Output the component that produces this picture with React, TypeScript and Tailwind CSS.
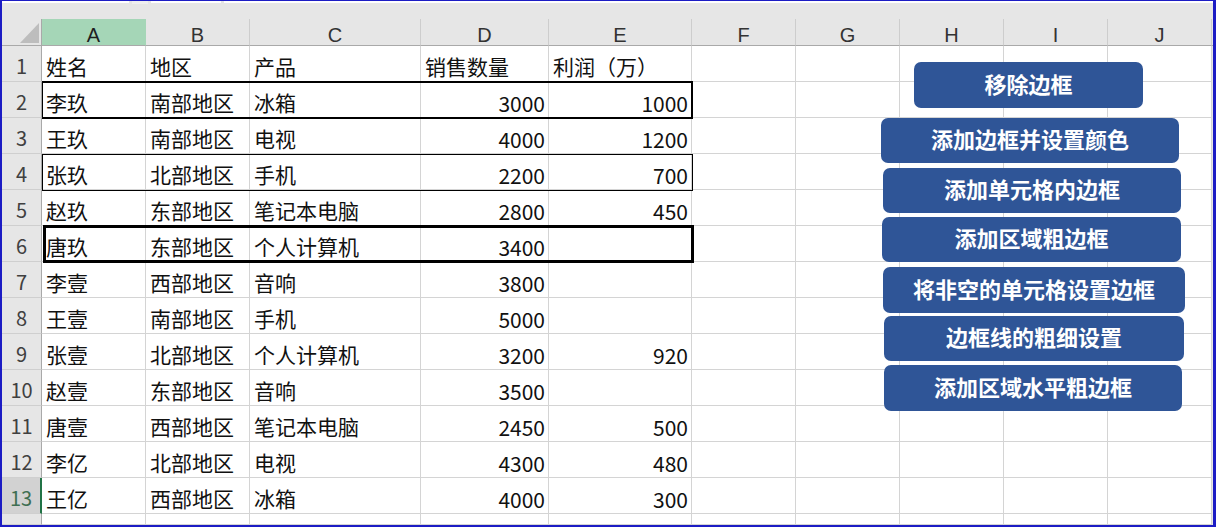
const COLS = [
  { key: "A", w: "w-[104px]" },
  { key: "B", w: "w-[104px]" },
  { key: "C", w: "w-[171px]" },
  { key: "D", w: "w-[128px]" },
  { key: "E", w: "w-[143px]" },
  { key: "F", w: "w-[104px]" },
  { key: "G", w: "w-[104px]" },
  { key: "H", w: "w-[104px]" },
  { key: "I", w: "w-[104px]" },
  { key: "J", w: "w-[104px]" },
];

const DATA = [
  ["姓名", "地区", "产品", "销售数量", "利润（万）"],
  ["李玖", "南部地区", "冰箱", "3000", "1000"],
  ["王玖", "南部地区", "电视", "4000", "1200"],
  ["张玖", "北部地区", "手机", "2200", "700"],
  ["赵玖", "东部地区", "笔记本电脑", "2800", "450"],
  ["唐玖", "东部地区", "个人计算机", "3400", ""],
  ["李壹", "西部地区", "音响", "3800", ""],
  ["王壹", "南部地区", "手机", "5000", ""],
  ["张壹", "北部地区", "个人计算机", "3200", "920"],
  ["赵壹", "东部地区", "音响", "3500", ""],
  ["唐壹", "西部地区", "笔记本电脑", "2450", "500"],
  ["李亿", "北部地区", "电视", "4300", "480"],
  ["王亿", "西部地区", "冰箱", "4000", "300"],
];

const BUTTONS = [
  { label: "移除边框", pos: "left-[912px] top-[16px] w-[229px] h-[46px]" },
  { label: "添加边框并设置颜色", pos: "left-[879px] top-[72px] w-[298px] h-[45px]" },
  { label: "添加单元格内边框", pos: "left-[881px] top-[122px] w-[298px] h-[45px]" },
  { label: "添加区域粗边框", pos: "left-[880px] top-[171px] w-[299px] h-[45px]" },
  { label: "将非空的单元格设置边框", pos: "left-[881px] top-[221px] w-[302px] h-[46px]" },
  { label: "边框线的粗细设置", pos: "left-[882px] top-[270px] w-[300px] h-[45px]" },
  { label: "添加区域水平粗边框", pos: "left-[882px] top-[319px] w-[298px] h-[46px]" },
];

function Row({ n, cells, short = false }: { n: number; cells: string[]; short?: boolean }) {
  const selected = n === 13;
  return (
    <div className={`flex ${short ? "h-[11px]" : "h-[36px]"}`}>
      <div
        className={`w-[40px] shrink-0 flex justify-center pt-[10px] border-b border-[#cfcfcf] text-[20px] leading-none ${
          selected
            ? "bg-[#d2d2d2] text-[#3f6f52] border-r-2 border-r-[#217346]"
            : "bg-[#e6e6e6] text-[#404040] border-r border-r-[#a9a9a9]"
        }`}
      >
        {n}
      </div>
      {COLS.map((c, i) => {
        const v = cells[i] ?? "";
        const num = n > 1 && (i === 3 || i === 4);
        return (
          <div
            key={c.key}
            className={`${c.w} shrink-0 bg-white border-r border-b border-[#d4d4d4] flex items-center pt-[6px] text-[21px] leading-none text-[#111] whitespace-nowrap ${
              num ? "justify-end pr-[3px] pt-[8px]" : "pl-[4px]"
            }`}
          >
            {v}
          </div>
        );
      })}
      <div className="flex-1 bg-[#e6e6e6]" />
    </div>
  );
}

export default function App() {
  return (
    <div className="w-[1216px] h-[527px] overflow-hidden bg-[#e6e6e6] border-l-2 border-r-[3px] border-t border-b-2 border-[#1c1cc4] font-['Noto_Sans_CJK_SC',sans-serif]">
      {/* formula bar remnants */}
      <div className="h-[18px] flex items-start gap-[3px]">
        <div className="w-[127px] h-[2px] bg-white" />
        <div className="w-[16px] h-[3px] bg-[#efefef]" />
        <div className="w-[70px] h-[2px] bg-white" />
        <div className="flex-1 h-[2px] bg-white" />
      </div>

      {/* column headers */}
      <div className="flex h-[27px] font-['Liberation_Sans',sans-serif]">
        <div className="w-[40px] shrink-0 relative border-b border-r border-[#a9a9a9]">
          <svg className="absolute left-[18px] top-[4px]" width="19" height="20" viewBox="0 0 19 20">
            <polygon points="19,0 19,20 0,20" fill="#bdbdbd" />
          </svg>
        </div>
        {COLS.map((c) => (
          <div
            key={c.key}
            className={`${c.w} shrink-0 flex justify-center items-center pt-[6px] text-[20px] leading-none border-b border-b-[#a9a9a9] border-r ${
              c.key === "A" ? "bg-[#a5d6b7] text-[#1f1f1f] border-r-[#a5d6b7]" : "text-[#333] border-r-[#cdcdcd]"
            }`}
          >
            {c.key}
          </div>
        ))}
        <div className="flex-1 border-b border-[#a9a9a9]" />
      </div>

      {/* sheet body */}
      <div className="relative">
        {DATA.map((cells, i) => (
          <Row key={i} n={i + 1} cells={cells} />
        ))}
        <Row n={14} cells={[]} short />

        {/* cell borders */}
        <div className="absolute left-[40px] top-[35px] w-[651px] h-[38px] border-2 border-l border-black" />
        <div className="absolute left-[40px] top-[108px] w-[651px] h-[37px] border border-black" />
        <div className="absolute left-[41px] top-[179px] w-[651px] h-[38px] border-[3px] border-black" />

        {/* macro buttons */}
        {BUTTONS.map((b) => (
          <div
            key={b.label}
            className={`absolute ${b.pos} rounded-[7px] bg-[#2f5597] flex items-center justify-center pb-[5px] text-white font-bold text-[22px] leading-none whitespace-nowrap`}
          >
            {b.label}
          </div>
        ))}
      </div>
    </div>
  );
}
